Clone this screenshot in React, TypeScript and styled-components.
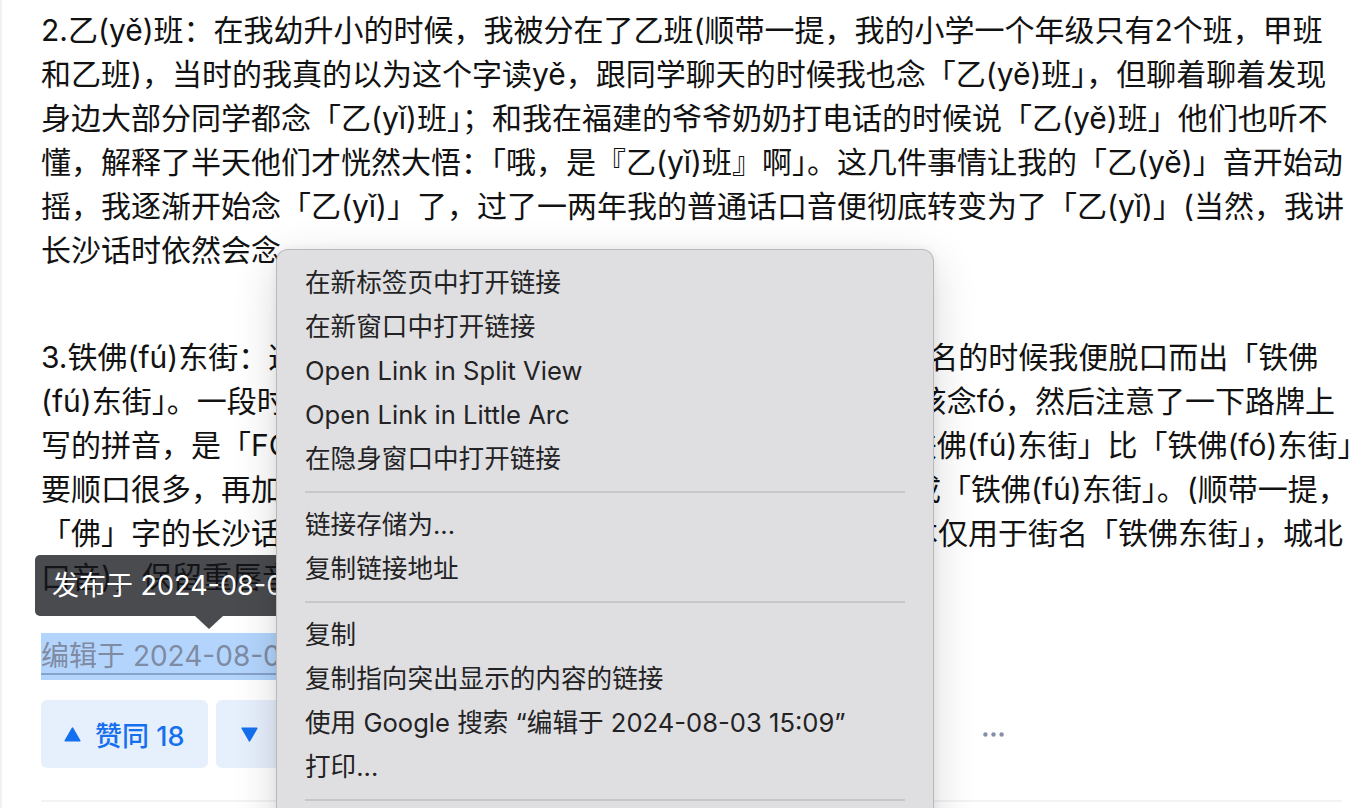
import React from "react";
import styled, { createGlobalStyle } from "styled-components";
import { MessageCircle, Send, Star, Heart } from "lucide-react";

const GlobalStyle = createGlobalStyle`
  html, body {
    margin: 0;
    padding: 0;
    height: 100%;
    overflow: hidden;
    background: #ffffff;
  }
  #root { height: 100%; }
  body {
    font-family: "Inter", "Noto Sans CJK SC", sans-serif;
    color: #121212;
  }
`;

const Page = styled.div`
  position: relative;
  height: 808px;
  overflow: hidden;
  border-left: 2px solid #f1f1f3;
  background: #ffffff;
`;

const Article = styled.div`
  padding: 8px 0 0 39px;
`;

const Paragraph = styled.p<{ $gap?: number }>`
  margin: 0 0 ${(p) => p.$gap ?? 0}px;
  font-size: 30px;
  line-height: 44px;
  white-space: nowrap;
  color: #121212;
`;

const Line = styled.span`
  display: block;
`;

const TimeRow = styled.div`
  margin-top: 34px;
  height: 47px;
`;

const TimeLink = styled.a`
  position: relative;
  display: inline-block;
  font-size: 28px;
  line-height: 47px;
  height: 47px;
  color: #7f8ba3;
  background: #b3d5fd;
  text-decoration: underline;
  text-decoration-color: #86a3cc;
  text-decoration-thickness: 2px;
  text-underline-offset: 7px;
  white-space: nowrap;
  cursor: pointer;
`;

const Tooltip = styled.div`
  position: absolute;
  left: -6px;
  bottom: calc(100% + 17px);
  height: 61px;
  padding: 0 17px;
  border-radius: 5px;
  background: rgba(20, 21, 26, 0.77);
  color: #ffffff;
  font-size: 27px;
  line-height: 61px;
  white-space: nowrap;
  text-decoration: none;
`;

const TooltipArrow = styled.span`
  position: absolute;
  left: 50%;
  bottom: calc(100% + 4px);
  transform: translateX(-50%);
  width: 0;
  height: 0;
  border-left: 14px solid transparent;
  border-right: 14px solid transparent;
  border-top: 13px solid rgba(20, 21, 26, 0.77);
`;

const ActionBar = styled.div`
  margin-top: 20px;
  height: 68px;
  display: flex;
  align-items: center;
`;

const VoteButton = styled.button<{ $iconOnly?: boolean }>`
  display: inline-flex;
  align-items: center;
  gap: 14px;
  height: 68px;
  margin: 0 0 0 ${(p) => (p.$iconOnly ? 8 : 0)}px;
  padding: ${(p) => (p.$iconOnly ? "0 25px" : "0 24px 0 23px")};
  border: none;
  border-radius: 6px;
  background: #e6effc;
  color: #1570ef;
  font-family: "Inter", "Noto Sans CJK SC", sans-serif;
  font-size: 27px;
  font-weight: 500;
  cursor: pointer;
`;

const ActionGroup = styled.div`
  display: flex;
  align-items: center;
  gap: 40px;
  width: 660px;
  margin-left: 24px;
  overflow: hidden;
`;

const ActionItem = styled.span`
  display: inline-flex;
  align-items: center;
  gap: 8px;
  font-size: 27px;
  color: #8590a6;
  white-space: nowrap;
`;

const MoreButton = styled.button`
  width: 52px;
  height: 68px;
  display: flex;
  align-items: center;
  justify-content: center;
  border: none;
  background: transparent;
  padding: 0;
  cursor: pointer;
`;

const Divider = styled.div`
  margin: 32px 30px 0 0;
  height: 2px;
  background: #f3f3f5;
`;

const Menu = styled.div`
  position: absolute;
  left: 274px;
  top: 249px;
  width: 658px;
  box-sizing: border-box;
  padding: 11px 0;
  background: #dfdfe1;
  border: 1px solid rgba(0, 0, 0, 0.17);
  border-radius: 12px;
  box-shadow: 0 12px 44px rgba(0, 0, 0, 0.16), 0 0 8px rgba(0, 0, 0, 0.06);
  font-family: "Inter", "Noto Sans CJK SC", sans-serif;
`;

const MenuItem = styled.div`
  height: 44px;
  line-height: 44px;
  padding: 0 28px;
  font-size: 25.6px;
  color: #232325;
  white-space: nowrap;
`;

const MenuSeparator = styled.div`
  height: 2px;
  margin: 10px 28px;
  background: #c7c7c9;
`;

const Triangle = ({ down }: { down?: boolean }) => (
  <svg width="17" height="15" viewBox="0 0 17 15" aria-hidden>
    <polygon
      points={down ? "1.2,1.2 15.8,1.2 8.5,13.8" : "8.5,1.2 15.8,13.8 1.2,13.8"}
      fill="currentColor"
      stroke="currentColor"
      strokeWidth="1.6"
      strokeLinejoin="round"
    />
  </svg>
);

const Dots = () => (
  <svg width="21" height="5" viewBox="0 0 21 5" aria-hidden>
    <circle cx="2.4" cy="2.5" r="2.2" fill="#8590a6" />
    <circle cx="10.5" cy="2.5" r="2.2" fill="#8590a6" />
    <circle cx="18.6" cy="2.5" r="2.2" fill="#8590a6" />
  </svg>
);

const para1 = [
  "2.乙(yě)班：在我幼升小的时候，我被分在了乙班(顺带一提，我的小学一个年级只有2个班，甲班",
  "和乙班)，当时的我真的以为这个字读yě，跟同学聊天的时候我也念「乙(yě)班」，但聊着聊着发现",
  "身边大部分同学都念「乙(yǐ)班」；和我在福建的爷爷奶奶打电话的时候说「乙(yě)班」他们也听不",
  "懂，解释了半天他们才恍然大悟：「哦，是『乙(yǐ)班』啊」。这几件事情让我的「乙(yě)」音开始动",
  "摇，我逐渐开始念「乙(yǐ)」了，过了一两年我的普通话口音便彻底转变为了「乙(yǐ)」(当然，我讲",
  "长沙话时依然会念。",
];

const para2 = [
  "3.铁佛(fú)东街：这是长沙的一条老街，第一次和朋友们聊起这个地名的时候我便脱口而出「铁佛",
  "(fú)东街」。一段时间后，我从语文老师那里了解到「佛」字其实应该念fó，然后注意了一下路牌上",
  "写的拼音，是「FO」，但我和身边的多数朋友们都一直觉得念起「铁佛(fú)东街」比「铁佛(fó)东街」",
  "要顺口很多，再加上周围的人基本上也都是这么念的，我就一直念成「铁佛(fú)东街」。(顺带一提，",
  "「佛」字的长沙话发音一般是fó，fu这个读音在现在的长沙话里基本仅用于街名「铁佛东街」，城北",
  "口音)，保留重唇音的古读)。",
];

const menuGroups: string[][] = [
  [
    "在新标签页中打开链接",
    "在新窗口中打开链接",
    "Open Link in Split View",
    "Open Link in Little Arc",
    "在隐身窗口中打开链接",
  ],
  ["链接存储为...", "复制链接地址"],
  [
    "复制",
    "复制指向突出显示的内容的链接",
    "使用 Google 搜索 “编辑于 2024-08-03 15:09”",
    "打印...",
  ],
  ["检查"],
];

export default function App() {
  return (
    <>
      <GlobalStyle />
      <Page>
        <Article>
          <Paragraph $gap={63}>
            {para1.map((l, i) => (
              <Line key={i}>{l}</Line>
            ))}
          </Paragraph>
          <Paragraph>
            {para2.map((l, i) => (
              <Line key={i}>{l}</Line>
            ))}
          </Paragraph>
          <TimeRow>
            <TimeLink>
              编辑于 2024-08-03 15:09
              <Tooltip>发布于 2024-08-03 11:26</Tooltip>
              <TooltipArrow />
            </TimeLink>
          </TimeRow>
          <ActionBar>
            <VoteButton>
              <Triangle />
              赞同 18
            </VoteButton>
            <VoteButton $iconOnly aria-label="反对">
              <Triangle down />
            </VoteButton>
            <ActionGroup>
              <ActionItem>
                <MessageCircle size={26} />
                添加评论
              </ActionItem>
              <ActionItem>
                <Send size={26} />
                分享
              </ActionItem>
              <ActionItem>
                <Star size={26} />
                收藏
              </ActionItem>
              <ActionItem>
                <Heart size={26} />
                喜欢
              </ActionItem>
            </ActionGroup>
            <MoreButton aria-label="更多">
              <Dots />
            </MoreButton>
          </ActionBar>
          <Divider />
        </Article>
        <Menu>
          {menuGroups.map((group, gi) => (
            <React.Fragment key={gi}>
              {gi > 0 && <MenuSeparator />}
              {group.map((item) => (
                <MenuItem key={item}>{item}</MenuItem>
              ))}
            </React.Fragment>
          ))}
        </Menu>
      </Page>
    </>
  );
}
